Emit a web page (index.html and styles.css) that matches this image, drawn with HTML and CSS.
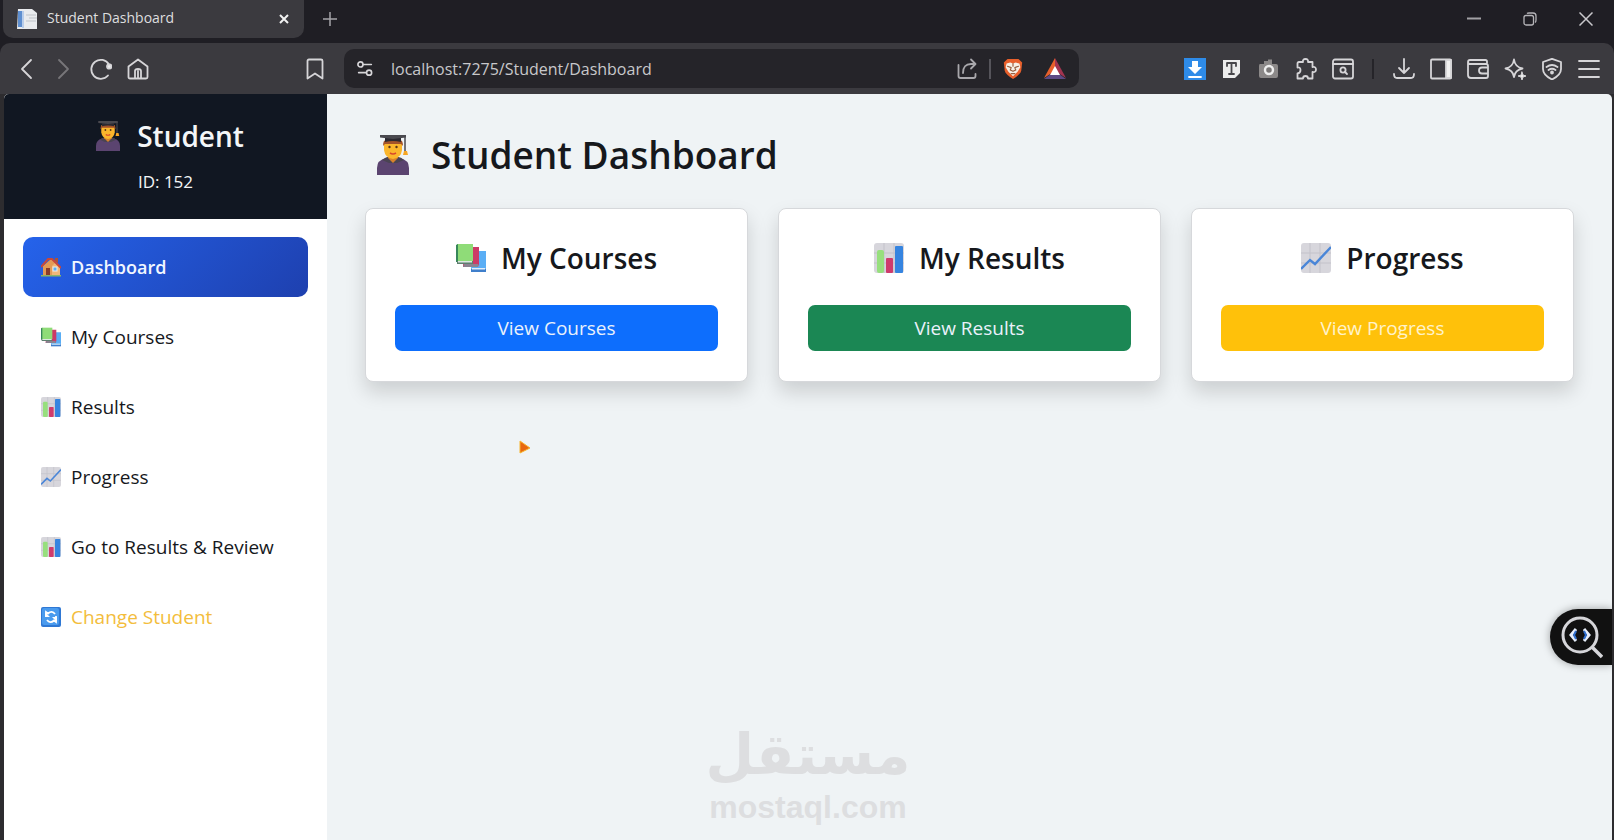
FILE: index.html
```html
<!DOCTYPE html>
<html lang="en">
<head>
<meta charset="utf-8">
<title>Student Dashboard</title>
<link rel="stylesheet" href="styles.css">
</head>
<body>
<svg class="sprite" aria-hidden="true">
  <symbol id="i-grad" viewBox="0 0 32 40">
    <path d="M0 40V33Q0 25 9 23l7-2 7 2q9 2 9 10v7z" fill="#5b4470"/>
    <path d="M5 25q4-3 6-3l5 5 5-5q3 0 6 3l-7 3H12z" fill="#4a4452"/>
    <path d="M11 19h10v4l-5 5-5-5z" fill="#d9822b"/>
    <path d="M7 6h18v9q-1 8-9 9-8-1-9-9z" fill="#fbb62c"/>
    <path d="M6 11q0-6 3-6h14q3 0 3 6l-2-2H8z" fill="#a4532a"/>
    <path d="M8 3h16v4q-8-2-16 0z" fill="#2c2a31"/>
    <path d="M3 0h26v2.500L16 4 3 2.500z" fill="#4a494f"/>
    <path d="M28 1v15" stroke="#4a494f" stroke-width="1.500"/>
    <path d="M27 16h3l1 4h-5z" fill="#f6a623"/>
    <circle cx="12.500" cy="12" r="1.200" fill="#5a3418"/><circle cx="19.500" cy="12" r="1.200" fill="#5a3418"/>
    <path d="M13 18q3 2 6 0" stroke="#d9472b" stroke-width="1.600" fill="none"/>
  </symbol>
  <symbol id="i-books" viewBox="0 0 30 30">
    <path d="M16 8h14v17l-1 3H15z" fill="#5aaef5"/><path d="M15 26h15v3H15z" fill="#3f7fcb"/><path d="M16 25h13v1.500H16z" fill="#e3eefa"/>
    <path d="M8 4h15v17l-1 3H7z" fill="#cc3a67"/><path d="M8 21h14v3H7z" fill="#8b8391"/>
    <path d="M1 1h16v17H1z" fill="#8fdc78"/><path d="M0 2l2-1v18H0z" fill="#37875a"/><path d="M1 18h16v3H1z" fill="#5e7f70"/><path d="M2 18h14v1.500H2z" fill="#dde8e2"/>
  </symbol>
  <symbol id="i-bars" viewBox="0 0 30 30">
    <rect width="30" height="30" rx="3" fill="#d7d6dc"/>
    <path d="M10 0v30M20 0v30M0 10h30M0 20h30" stroke="#c3c2ca"/>
    <rect x="3" y="7" width="7" height="23" rx="2" fill="#97df7d"/>
    <rect x="12" y="15" width="7" height="15" rx="1" fill="#cf3b6c"/>
    <rect x="21" y="3" width="8" height="27" rx="1" fill="#3584e0"/>
  </symbol>
  <symbol id="i-line" viewBox="0 0 30 30">
    <rect width="30" height="30" rx="3" fill="#d7d6dc"/>
    <path d="M9 0v30M19 0v30M0 10h30M0 20h30" stroke="#c3c2ca"/>
    <path d="M0 26l9-9 5 4L30 4" fill="none" stroke="#4a86d8" stroke-width="2.400"/>
  </symbol>
  <symbol id="i-house" viewBox="0 0 20 20">
    <path d="M2 9l8-7 8 7v9H2z" fill="#e39a55"/><path d="M11 9l4-4 4 5v8h-8z" fill="#efb779"/>
    <path d="M14 1h3v5l-3-2z" fill="#a9523a"/><path d="M0 10L7 2h4l9 9" fill="none" stroke="#c9473a" stroke-width="2"/>
    <rect x="5" y="11" width="4" height="7" fill="#8a3c2c"/><rect x="12" y="10" width="4" height="4" fill="#58aef2" stroke="#eee"/>
    <path d="M0 18h20v1.500H0z" fill="#8bb565"/>
  </symbol>
  <symbol id="i-sync" viewBox="0 0 20 20">
    <rect width="20" height="20" rx="2" fill="#2f78d4"/><rect x="1" y="1" width="17" height="17" rx="2" fill="#4a9bee"/>
    <path d="M5 10V5l2 1.500Q11 3 14 7M15 9v6l-2-1.500Q9 17 6 13" fill="none" stroke="#fff" stroke-width="1.800"/>
    <path d="M4 5v5h5zM16 15v-5h-5z" fill="#fff"/>
  </symbol>
</svg>

<div class="window">
  <header class="tabs">
    <div class="tab">
      <svg class="favicon" viewBox="0 0 20 20"><path d="M1 0h14l5 4v16H0z" fill="#e9ebee"/><path d="M1 2h4v16H1z" fill="#5f8fd0"/><path d="M5 2h2v17H5z" fill="#b9cdea"/><path d="M9 6h10M12 9h8M9 12h10" stroke="#bfc3c9"/></svg>
      <span class="tab-title">Student Dashboard</span>
      <button class="tab-close" aria-label="Close tab"><svg width="10" height="10" viewBox="0 0 10 10"><path d="M1 1l8 8M9 1L1 9" stroke="#f2f2f2" stroke-width="2"/></svg></button>
    </div>
    <button class="tab-new" aria-label="New tab"><svg width="14" height="14" viewBox="0 0 14 14"><path d="M7 0v14M0 7h14" stroke="#a5a4a8" stroke-width="1.500"/></svg></button>
    <div class="window-controls">
      <button aria-label="Minimise"><svg width="14" height="14" viewBox="0 0 14 14"><path d="M0 6.500h14" stroke="#a2a1a5" stroke-width="2"/></svg></button>
      <button aria-label="Restore"><svg width="14" height="14" viewBox="0 0 14 14" fill="none" stroke="#b5b4b8" stroke-width="1.300"><rect x="1" y="3.500" width="9.500" height="9.500" rx="2"/><path d="M4 1.500Q4.500 1 6 1h4q3 0 3 3v4q0 2-1 2.500"/></svg></button>
      <button aria-label="Close window"><svg width="14" height="14" viewBox="0 0 14 14"><path d="M.5.5l13 13M13.500.5L.5 13.500" stroke="#c9c8cc" stroke-width="1.500"/></svg></button>
    </div>
  </header>

  <nav class="toolbar" aria-label="Browser toolbar">
    <button class="tool" aria-label="Back"><svg viewBox="0 0 22 22"><path d="M15 2L6 11l9 9"/></svg></button>
    <button class="tool dim" aria-label="Forward"><svg viewBox="0 0 22 22"><path d="M6 2l9 9-9 9"/></svg></button>
    <button class="tool" aria-label="Reload"><svg viewBox="0 0 22 22"><path d="M18 17.500A9.500 9.500 0 1 1 19 6.500"/><circle cx="19.200" cy="8.500" r="2.200" fill="#eee"/></svg></button>
    <button class="tool" aria-label="Home"><svg viewBox="0 0 22 22"><path d="M1.500 8.500L11 1.500l9.500 7V19q0 1.500-1.500 1.500H3q-1.500 0-1.500-1.500zM8 20v-7q0-2 3-2t3 2v7M11 13v7"/></svg></button>
    <button class="tool bookmark" aria-label="Bookmark"><svg viewBox="0 0 22 22"><path d="M3.500 20.500V3q0-1.500 1.500-1.500h12q1.500 0 1.500 1.500v17.500L11 15.500z"/></svg></button>
    <div class="address">
      <button class="tool site" aria-label="Site settings"><svg viewBox="0 0 22 22"><circle cx="6" cy="6" r="2.800"/><path d="M9 6h9M4 15h8"/><circle cx="15.500" cy="15" r="2.800"/></svg></button>
      <input class="url" type="text" aria-label="Address" value="localhost:7275/Student/Dashboard">
      <button class="tool share" aria-label="Share"><svg viewBox="0 0 22 22"><path d="M1.500 7v11q0 2 2 2h13q2 0 2-2v-2M6 15q0-9 8-9h4M14 1.500L18.500 6 14 10.500"/></svg></button>
      <span class="rule light"></span>
      <button class="tool" aria-label="Shields"><svg viewBox="0 0 22 24"><path d="M5 1h12l4 4-1 9q-1 4-9 9-8-5-9-9L1 5z" fill="#e8602c" stroke="none"/><path d="M4 6l4-1 3 1 3-1 4 1 1 4-3 5-5 5-5-5-3-5z" fill="#f6f0e6" stroke="none"/><path d="M5 9l4 1.500L8 13l3 1.500 3-1.500-1-2.500L17 9M11 6v3M9 17h4" stroke="#9a6040" stroke-width="1.300"/></svg></button>
      <button class="tool bat" aria-label="Rewards"><svg viewBox="0 0 22 22"><path d="M11 0L0 20l11-7z" fill="#e8602c" stroke="none"/><path d="M11 0l11 20-11-7z" fill="#a33450" stroke="none"/><path d="M0 21l11-8 11 8z" fill="#5d4a85" stroke="none"/><path d="M11 8l5 9H6z" fill="#fff" stroke="none"/></svg></button>
    </div>
    <button class="tool" aria-label="Download manager"><svg viewBox="0 0 22 22"><rect width="22" height="22" fill="#2e8be8" stroke="none"/><path d="M8 3h6v6h4l-7 7-7-7h4z" fill="#fff" stroke="none"/><path d="M5 19h12" stroke="#fff"/></svg></button>
    <button class="tool" aria-label="Text extension"><svg viewBox="0 0 22 22"><path d="M2 2h17v13l-5 5H2z" fill="#ececec" stroke="none"/><path d="M6 8V5h9v3M10.500 5v11M8 16h5" stroke="#47464a"/></svg></button>
    <button class="tool" aria-label="Screenshot extension"><svg viewBox="0 0 22 22"><path d="M2 6h4V3h4V1.500h4V6h4q2 0 2 2v10q0 2-2 2H3q-2 0-2-2V8q0-2 1-2z" fill="#8c8989" stroke="none"/><circle cx="11" cy="12" r="4" fill="#7b7878" stroke="#eee" stroke-width="2.400"/></svg></button>
    <button class="tool" aria-label="Extensions"><svg viewBox="0 0 22 22"><path d="M4 4h4Q7.500 1 10.500 1T13 4h4.500v5q3.500-.5 3.500 2.500T17.500 14v6.500H13q0-2.500-2.500-2.500T8 20.500H2.500V15.500Q5.500 15 5.500 12T2.500 9.500V5.500Q2.500 4 4 4z"/></svg></button>
    <button class="tool" aria-label="Search tabs"><svg viewBox="0 0 22 22"><rect x="1" y="1.500" width="20" height="19" rx="2"/><path d="M1 6h20M13 14l2 2"/><circle cx="11" cy="12" r="2.600"/></svg></button>
    <span class="rule"></span>
    <button class="tool" aria-label="Downloads"><svg viewBox="0 0 22 22"><path d="M11 1v14M6 10l5 5 5-5M1 16q0 4 3 4h14q3 0 3-4"/></svg></button>
    <button class="tool" aria-label="Sidebar"><svg viewBox="0 0 22 22"><rect x="1" y="1.500" width="20" height="19" rx="1"/><path d="M16 2h5v18h-5z" fill="#f1f1f1"/></svg></button>
    <button class="tool" aria-label="Wallet"><svg viewBox="0 0 22 22"><path d="M20 5V3.500Q20 2 18.500 2H3Q1 2 1 4t2 2h16q2 0 2 2v10q0 2-2 2H4q-3 0-3-3V4M21 9.500h-6q-3 0-3 3t3 3h6"/></svg></button>
    <button class="tool" aria-label="Assistant"><svg viewBox="0 0 22 22"><path d="M10 1.500q1 7.500 8.500 9Q11 12 10 19q-1-7-8.500-8.500Q9 9 10 1.500z"/><path d="M18 14l1 3 3 1-3 1-1 3-1-3-3-1 3-1z" fill="#eee" stroke-width="1"/></svg></button>
    <button class="tool" aria-label="VPN"><svg viewBox="0 0 22 22"><path d="M11 .8l9 3.200v7q0 6-9 10.500Q2 17 2 11V4zM5.500 9q5.500-4 11 0M7.500 12q3.500-2.500 7 0"/><circle cx="11" cy="14.500" r="1" fill="#eee"/></svg></button>
    <button class="tool" aria-label="Menu"><svg viewBox="0 0 22 22"><path d="M1 3h20M1 11h20M1 19h20"/></svg></button>
  </nav>

  <div class="page">
    <aside class="sidebar">
      <div class="profile">
        <h2 class="profile-name"><svg class="grad-small"><use href="#i-grad"/></svg>Student</h2>
        <p class="profile-id">ID: 152</p>
      </div>
      <nav class="menu" aria-label="Student">
        <a class="menu-item active" href="#"><svg><use href="#i-house"/></svg>Dashboard</a>
        <a class="menu-item" href="#"><svg><use href="#i-books"/></svg>My Courses</a>
        <a class="menu-item" href="#"><svg><use href="#i-bars"/></svg>Results</a>
        <a class="menu-item" href="#"><svg><use href="#i-line"/></svg>Progress</a>
        <a class="menu-item" href="#"><svg><use href="#i-bars"/></svg>Go to Results &amp; Review</a>
        <a class="menu-item change" href="#"><svg><use href="#i-sync"/></svg>Change Student</a>
      </nav>
    </aside>
    <main class="content">
      <h1 class="heading"><svg class="grad-large"><use href="#i-grad"/></svg>Student Dashboard</h1>
      <div class="cards">
        <section class="card"><h3 class="card-title"><svg><use href="#i-books"/></svg>My Courses</h3><a class="action primary" href="#">View Courses</a></section>
        <section class="card"><h3 class="card-title"><svg><use href="#i-bars"/></svg>My Results</h3><a class="action success" href="#">View Results</a></section>
        <section class="card"><h3 class="card-title"><svg><use href="#i-line"/></svg>Progress</h3><a class="action warning" href="#">View Progress</a></section>
      </div>
    </main>
    <svg class="pointer" viewBox="0 0 12 14"><path d="M1 1l10 7-10 5z" fill="#e8670f" stroke="#f7b52c"/></svg>
    <button class="inspect" aria-label="Inspect code"><svg width="44" height="44" viewBox="0 0 44 44" fill="none"><circle cx="21" cy="20" r="17" stroke="#d6d6da" stroke-width="3"/><path d="M33 32l10 10" stroke="#d6d6da" stroke-width="3.500"/><path d="M17 14l-5 6 5 6M25 14l5 6-5 6" stroke="#e6eefa" stroke-width="3"/><path d="M17 16l-2 4 2 4M25 16l2 4-2 4" stroke="#2f6fd0" stroke-width="2"/></svg></button>
    <div class="watermark"><span class="mark-ar" lang="ar" dir="rtl">مستقل</span><span class="mark-en">mostaql.com</span></div>
  </div>
</div>
</body>
</html>
```
FILE: styles.css
```css
* { box-sizing: border-box; }
body { margin: 0; font-family: "Open Sans", "Noto Sans", sans-serif; font-size: 19px; color: #16181c; background: #1f1e24; }
button { padding: 0; border: 0; background: none; font: inherit; color: inherit; }
a { text-decoration: none; color: inherit; }
h1, h2, h3, p { margin: 0; }
svg { flex: none; display: block; }
.sprite { position: absolute; width: 0; height: 0; }
.window { display: flex; flex-direction: column; min-height: 100vh; background: linear-gradient(#1f1e24 60px, #2d2c2f 60px); }

.tabs { display: flex; align-items: flex-start; height: 43px; padding-left: 3px; }
.tab { display: flex; align-items: center; width: 301px; height: 38px; padding: 0 15px 0 14px; border-radius: 0 0 10px 10px; background: #3b3a3f; color: #dededf; font-size: 14px; }
.favicon { width: 20px; height: 20px; margin-right: 10px; }
.tab-title { flex: 1; line-height: 20px; padding-bottom: 2px; }
.tab-new { display: grid; place-items: center; width: 52px; height: 38px; }
.window-controls { display: flex; margin-left: auto; }
.window-controls button { display: grid; place-items: center; width: 56px; height: 38px; }

.toolbar { display: flex; align-items: center; height: 51px; padding: 0 7px 0 8px; border-radius: 10px 10px 0 0; background: #3b3a3f; }
.tool { display: grid; place-items: center; flex: none; width: 37px; height: 37px; }
.tool svg { width: 22px; height: 22px; fill: none; stroke: #d6d5d8; stroke-width: 1.8; stroke-linecap: round; stroke-linejoin: round; }
.dim svg { stroke: #77767a; }
.bookmark { margin-left: 140px; }
.address { display: flex; align-items: center; flex: 1; height: 39px; margin: 0 97px 0 11px; padding: 0 6px 0 2px; border-radius: 10px; background: #252429; }
.site svg { width: 20px; height: 20px; }
.url { flex: 1; min-width: 0; margin-left: 8px; padding: 0; border: 0; outline: 0; background: none; color: #c8c8cb; font: inherit; font-size: 16px; }
.share svg { stroke: #a8a7ab; }
.bat { margin-left: 5px; }
.rule { width: 2px; height: 20px; margin: 0 11px; background: #252429; }
.rule.light { margin: 0 3px; background: #55545a; }

.page { position: relative; display: flex; flex: 1; margin: 0 2px 0 4px; border-radius: 5px 5px 0 0; overflow: hidden; background: #eff3f5; }
.sidebar { flex: none; width: 20%; min-width: 323px; background: #fff; }
.profile { padding: 22px 0 23px; background: #111722; color: #f4f6f8; text-align: center; }
.profile-name { display: flex; align-items: center; justify-content: center; gap: 17px; margin-bottom: 12px; padding-left: 9px; font-size: 28px; font-weight: 600; line-height: 40px; }
.grad-small { width: 24px; height: 30px; }
.profile-id { font-size: 17px; line-height: 28px; }
.menu { display: flex; flex-direction: column; gap: 10px; padding: 18px 19px; }
.menu-item { display: flex; align-items: center; gap: 10px; height: 60px; padding: 0 18px; border-radius: 10px; white-space: nowrap; }
.menu-item svg { width: 20px; height: 20px; }
.active { background: linear-gradient(135deg, #2563eb, #1e40af); color: #f2f7ff; font-size: 18px; font-weight: 600; }
.change { color: #f3bd3c; }

.content { flex: 1; padding: 36px 38px; }
.heading { display: flex; align-items: center; gap: 22px; margin-bottom: 28px; padding-left: 12px; font-size: 37px; font-weight: 600; line-height: 50px; }
.grad-large { width: 32px; height: 40px; }
.cards { display: grid; grid-template-columns: repeat(3, 1fr); gap: 30px; }
.card { padding: 30px 29px; border: 1px solid #d6d8db; border-radius: 8px; background: #fff; box-shadow: 0 10px 20px rgba(0, 0, 0, .15); }
.card-title { display: flex; align-items: center; justify-content: center; gap: 15px; margin-bottom: 28px; font-size: 28px; font-weight: 600; line-height: 38px; }
.card-title svg { width: 30px; height: 30px; }
.action { display: block; height: 46px; border-radius: 7px; color: #eaf1fb; line-height: 46px; text-align: center; }
.primary { background: #0d6efd; }
.success { background: #1b8754; }
.warning { background: #ffc10a; color: #fff3cb; }

.pointer { position: absolute; left: 515px; top: 346px; width: 12px; height: 14px; }
.inspect { position: absolute; right: 0; bottom: 175px; display: grid; place-items: center; width: 62px; height: 56px; border-radius: 28px 0 0 28px; background: #111; box-shadow: 0 0 8px rgba(0, 0, 0, .35); }
.watermark { position: absolute; left: 0; right: 0; bottom: 14px; display: flex; flex-direction: column; align-items: center; color: #dddee0; font-weight: 700; }
.mark-ar { font-family: "DejaVu Sans", sans-serif; font-size: 56px; line-height: 66px; }
.mark-en { font-family: "Liberation Sans", sans-serif; font-size: 32px; line-height: 38px; }
```
